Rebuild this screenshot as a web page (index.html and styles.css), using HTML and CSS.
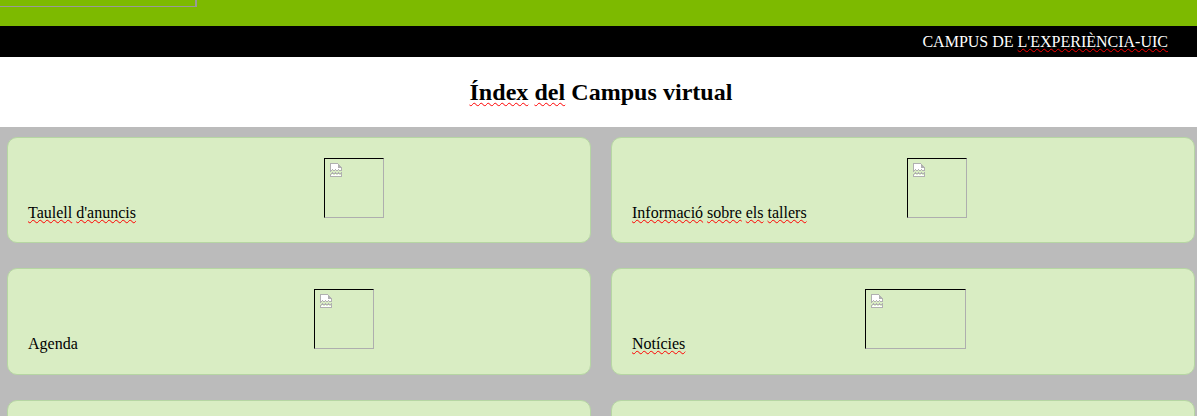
FILE: index.html
```html
<!DOCTYPE html>
<html lang="ca">
<head>
<meta charset="utf-8">
<title>Índex del Campus virtual</title>
<link rel="stylesheet" href="styles.css">
</head>
<body>
<svg class="defs" width="0" height="0" aria-hidden="true">
  <symbol id="broken" viewBox="0 0 12 14">
    <path d="M1 1H8V2H9V3H10V4H11V8H9V7H8V8H6V7H5V8H3V7H2V8H1Z" fill="#fff" shape-rendering="crispEdges"/>
    <path d="M0 0H8V1H1V7H2V6H3V7H5V6H6V7H8V6H9V7H11V5H8V1H9V2H10V3H11V4H12V8H9V7H8V8H6V7H5V8H3V7H2V8H1V9H0Z" fill="#b0b0b0" shape-rendering="crispEdges"/>
    <path d="M0 11H1V10H2V9H3V10H5V9H6V10H8V9H9V10H11V9H12V14H0ZM1 12V13H11V11H9V12H8V11H6V12H5V11H3V12H2V11H1Z" fill="#b0b0b0" fill-rule="evenodd" shape-rendering="crispEdges"/>
    <path d="M1 12H2V11H3V12H5V11H6V12H8V11H9V12H11V13H1Z" fill="#fff" shape-rendering="crispEdges"/>
  </symbol>
</svg>
<header class="top">
  <div class="logo-frame"></div>
</header>
<div class="bar"><span>CAMPUS DE <span class="sp">L'EXPERIÈNCIA-UIC</span></span></div>
<div class="title"><h1><span class="sp">Índex</span> <span class="sp">del</span> Campus virtual</h1></div>
<main class="grid">
  <div class="card"><span class="sp">Taulell</span> <span class="sp">d'anuncis</span><span class="pic gap-a"><svg class="ico"><use href="#broken"/></svg></span></div>
  <div class="card"><span class="sp">Informació</span> <span class="sp">sobre</span> <span class="sp">els</span> <span class="sp">tallers</span><span class="pic gap-b"><svg class="ico"><use href="#broken"/></svg></span></div>
  <div class="card">Agenda<span class="pic gap-c"><svg class="ico"><use href="#broken"/></svg></span></div>
  <div class="card"><span class="sp">Notícies</span><span class="pic wide gap-d"><svg class="ico"><use href="#broken"/></svg></span></div>
  <div class="card"></div>
  <div class="card"></div>
</main>
</body>
</html>
```
FILE: styles.css
```css
html, body {
  margin: 0;
  padding: 0;
  height: 416px;
  overflow: hidden;
}
body {
  background: #bbb;
  color: #000;
  font: 16px "Liberation Serif", "Times New Roman", serif;
}
.defs {
  display: block;
  height: 0;
}
.top {
  height: 26px;
  background: #7dba00;
}
.logo-frame {
  width: 195px;
  height: 6px;
  border-right: 2px solid #999;
  border-bottom: 1px solid #999;
}
.bar {
  height: 31px;
  background: #000;
  color: #fff;
  display: flex;
  justify-content: flex-end;
  align-items: center;
  padding-right: 29px;
}
.title {
  height: 70px;
  background: #fff;
  display: flex;
  justify-content: center;
  align-items: center;
  padding-left: 5px;
}
.title h1 {
  margin: 0;
  font-size: 24px;
  font-weight: bold;
  letter-spacing: 0.04px;
}
.sp {
  text-decoration: underline wavy #f00 1px;
  text-underline-offset: 1px;
  text-decoration-skip-ink: none;
}
.title .sp {
  text-underline-offset: 2px;
}
.grid {
  box-sizing: border-box;
  height: 289px;
  overflow: hidden;
  display: grid;
  grid-template-columns: 584px 584px;
  grid-auto-rows: 106.4px;
  column-gap: 20px;
  row-gap: 25px;
  padding: 10px 2px 0 7px;
}
.card {
  box-sizing: border-box;
  padding: 20px;
  border: 1px solid #b6d6a3;
  border-radius: 10px;
  background: #d9edc3;
}
.pic {
  display: inline-block;
  box-sizing: border-box;
  width: 60px;
  height: 60px;
  border: 1px solid;
  border-color: #000 #aeaeae #aeaeae #000;
  vertical-align: baseline;
}
.pic.wide {
  width: 101px;
}
.ico {
  display: block;
  width: 12px;
  height: 14px;
  margin: 4px 0 0 5px;
}
.gap-a { margin-left: 188px; }
.gap-b { margin-left: 100px; }
.gap-c { margin-left: 236px; }
.gap-d { margin-left: 180px; }
```
